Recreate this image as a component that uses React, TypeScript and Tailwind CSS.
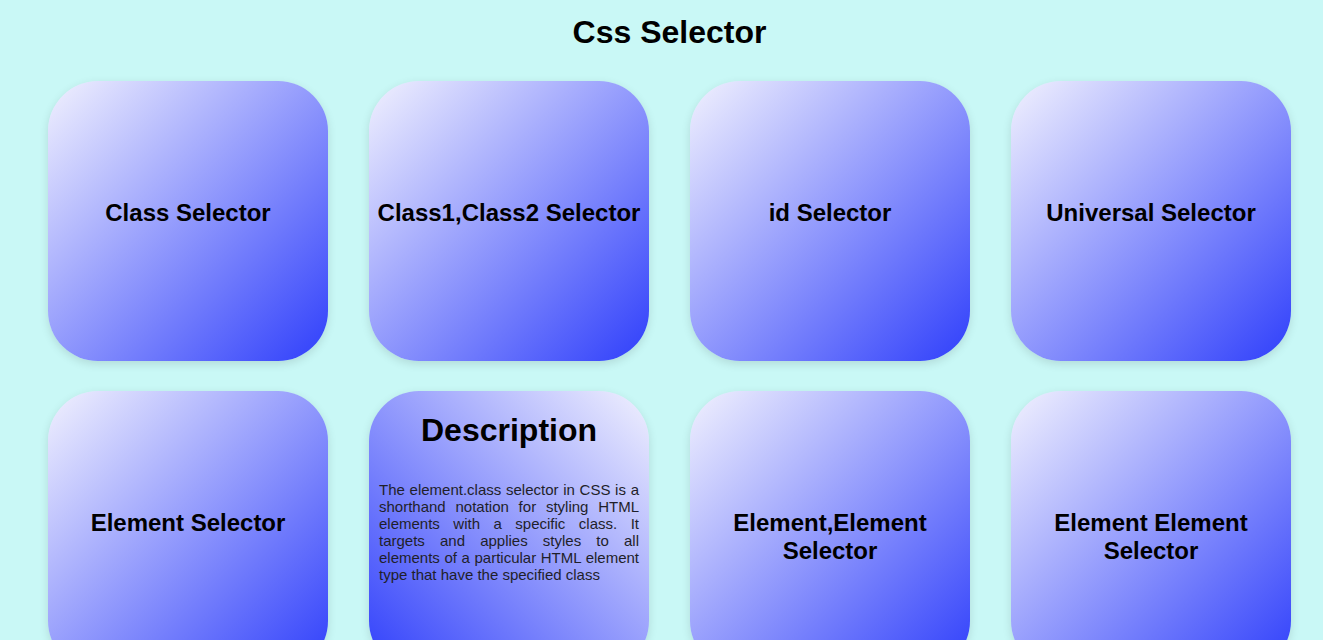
const selectors = [
  "Class Selector",
  "Class1,Class2 Selector",
  "id Selector",
  "Universal Selector",
  "Element Selector",
  null,
  "Element,Element Selector",
  "Element Element Selector",
];

function SelectorCard({ label }: { label: string }) {
  return (
    <div className="h-[280px] w-[280px] rounded-[50px] bg-[linear-gradient(135deg,#f1f1fe_0%,#2f3ffb_100%)] px-2 pt-[118px] text-center shadow-[0_3px_10px_rgba(0,0,0,0.12)]">
      <h2 className="text-[24px] leading-[28px] font-bold text-black">{label}</h2>
    </div>
  );
}

function DescriptionCard() {
  return (
    <div className="h-[280px] w-[280px] rounded-[50px] bg-[linear-gradient(45deg,#2f3ffb_0%,#f1f1fe_100%)] px-[10px] pt-[21px] text-center shadow-[0_3px_10px_rgba(0,0,0,0.12)]">
      <h2 className="text-[32px] leading-[37px] font-bold text-black">Description</h2>
      <p className="mt-[32px] text-justify text-[15px] leading-[17px] text-[#1f1f2a]">
        The element.class selector in CSS is a shorthand notation for styling HTML elements with a
        specific class. It targets and applies styles to all elements of a particular HTML element
        type that have the specified class
      </p>
    </div>
  );
}

export default function App() {
  return (
    <div className="min-h-screen bg-[#c9f8f6] pt-[14px] font-['Liberation_Sans',Arial,sans-serif]">
      <h1 className="pl-[16px] text-center text-[32px] leading-[37px] font-bold text-black">Css Selector</h1>
      <div className="mt-[30px] grid grid-cols-[repeat(4,280px)] gap-x-[41px] gap-y-[30px] pl-[48px]">
        {selectors.map((label, i) =>
          label ? <SelectorCard key={i} label={label} /> : <DescriptionCard key={i} />
        )}
      </div>
    </div>
  );
}
